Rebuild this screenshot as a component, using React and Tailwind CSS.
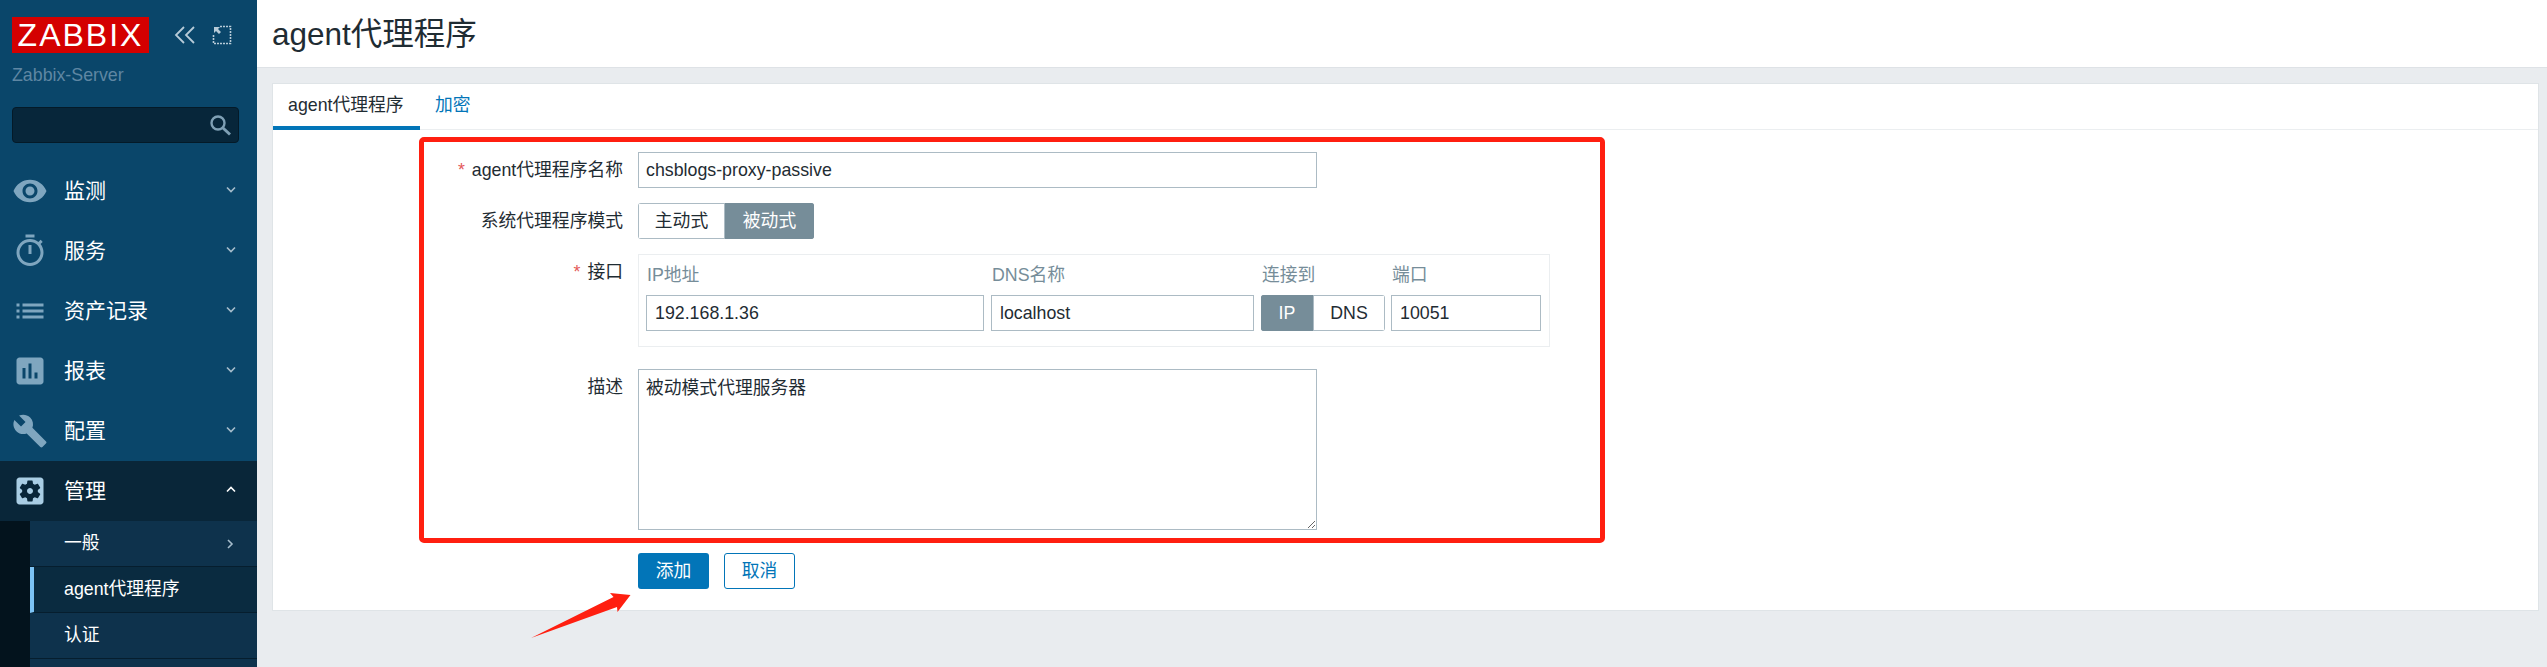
import React from 'react';

const font = { fontFamily: '"Liberation Sans", "Noto Sans CJK SC", sans-serif' };

const icons = {
    eye: 'M12 4.5C7 4.5 2.73 7.61 1 12c1.73 4.39 6 7.5 11 7.5s9.27-3.11 11-7.5c-1.73-4.39-6-7.5-11-7.5zM12 17c-2.76 0-5-2.24-5-5s2.24-5 5-5 5 2.24 5 5-2.24 5-5 5zm0-8c-1.66 0-3 1.34-3 3s1.34 3 3 3 3-1.34 3-3-1.34-3-3-3z',
    timer: 'M15 1H9v2h6V1zm-4 13h2V8h-2v6zm8.03-6.61l1.42-1.42c-.43-.51-.9-.99-1.41-1.41l-1.42 1.42C16.07 4.74 14.12 4 12 4c-4.97 0-9 4.03-9 9s4.02 9 9 9 9-4.03 9-9c0-2.12-.74-4.07-1.97-5.61zM12 20c-3.87 0-7-3.13-7-7s3.13-7 7-7 7 3.13 7 7-3.13 7-7 7z',
    list: 'M3 13h2v-2H3v2zm0 4h2v-2H3v2zm0-8h2V7H3v2zm4 4h14v-2H7v2zm0 4h14v-2H7v2zM7 7v2h14V7H7z',
    chart: 'M19 3H5c-1.1 0-2 .9-2 2v14c0 1.1.9 2 2 2h14c1.1 0 2-.9 2-2V5c0-1.1-.9-2-2-2zM9 17H7v-7h2v7zm4 0h-2V7h2v10zm4 0h-2v-4h2v4z',
    wrench: 'M22.7 19l-9.1-9.1c.9-2.3.4-5-1.5-6.9-2-2-5-2.4-7.4-1.3L9 6 6 9 1.6 4.7C.4 7.1.9 10.1 2.9 12.1c1.9 1.9 4.6 2.4 6.9 1.5l9.1 9.1c.4.4 1 .4 1.4 0l2.3-2.3c.5-.4.5-1.1.1-1.4z',
    gear: 'M12 10c-1.1 0-2 .9-2 2s.9 2 2 2 2-.9 2-2-.9-2-2-2zm7-7H5c-1.11 0-2 .9-2 2v14c0 1.1.89 2 2 2h14c1.11 0 2-.9 2-2V5c0-1.1-.89-2-2-2zm-1.75 9c0 .23-.02.46-.05.68l1.48 1.16c.13.11.17.3.08.45l-1.4 2.42c-.09.15-.27.21-.43.15l-1.74-.7c-.36.28-.76.51-1.18.69l-.26 1.85c-.03.17-.18.3-.35.3h-2.8c-.17 0-.32-.13-.35-.29l-.26-1.85c-.43-.18-.82-.41-1.18-.69l-1.74.7c-.16.06-.34 0-.43-.15l-1.4-2.42c-.09-.15-.05-.34.08-.45l1.48-1.16c-.03-.23-.05-.46-.05-.69 0-.23.02-.46.05-.68l-1.48-1.16c-.13-.11-.17-.3-.08-.45l1.4-2.42c.09-.15.27-.21.43-.15l1.74.7c.36-.28.76-.51 1.18-.69l.26-1.85c.03-.17.18-.3.35-.3h2.8c.17 0 .32.13.35.29l.26 1.85c.43.18.82.41 1.18.69l1.74-.7c.16-.06.34 0 .43.15l1.4 2.42c.09.15.05.34-.08.45l-1.48 1.16c.03.23.05.46.05.69z',
};

function Chevron({ dir = 'down', light }) {
    const d = dir === 'down' ? 'M1 1.5l4 4 4-4' : dir === 'up' ? 'M1 5.5l4-4 4 4' : 'M2 1l4 4-4 4';
    return (
        <svg viewBox="0 0 10 10" className={`w-[10px] h-[10px] shrink-0 fill-none stroke-[1.6] ${light ? 'stroke-white' : 'stroke-[#a5bccb]'}`}>
            <path d={d} />
        </svg>
    );
}

function NavItem({ icon, label, open }) {
    return (
        <div className={`flex items-center h-[60px] pl-3 pr-[21px] ${open ? 'bg-[#092639]' : ''}`}>
            <svg viewBox="0 0 24 24" className={`w-9 h-9 shrink-0 ${open ? 'fill-[#a9cde4]' : 'fill-[#7fa6bf]'}`}>
                <path d={icons[icon]} />
            </svg>
            <span className="ml-4 flex-1 text-[21px] text-white">{label}</span>
            <Chevron dir={open ? 'up' : 'down'} light={open} />
        </div>
    );
}

function SubItem({ label, active, arrow }) {
    return (
        <div className={`flex items-center h-[46px] pr-[21px] border-b border-[#061e2e] ${active ? 'bg-[#0a2b40] border-l-4 border-l-[#7cc3f5] pl-[30px]' : 'pl-[34px] bg-[#0e324c]'}`}>
            <span className="flex-1 text-[17.8px] text-white">{label}</span>
            {arrow && <Chevron dir="right" />}
        </div>
    );
}

function Sidebar() {
    return (
        <aside className="w-[257px] shrink-0 h-full bg-[#0a466a] overflow-hidden">
            <div className="flex items-center pt-[17px] pl-3">
                <div className="w-[137px] h-9 bg-[#d40000] text-white text-[32px] leading-9 font-normal text-center tracking-[2px] overflow-hidden">ZABBIX</div>
                <svg viewBox="0 0 22 20" className="ml-[25px] w-[22px] h-5 fill-none stroke-[#b7cbd8] stroke-[1.8]">
                    <path d="M10 2L2 10l8 8M20 2l-8 8 8 8" />
                </svg>
                <svg viewBox="0 0 20 20" className="ml-[16px] w-5 h-5 fill-none stroke-[#b7cbd8]">
                    <path d="M8 1.500h10.500v17H1.500V10" strokeWidth="1.6" strokeDasharray="2 1" />
                    <path d="M2 2h6l-2 2 3 3-2 2-3-3-2 2z" fill="#b7cbd8" stroke="none" />
                </svg>
            </div>
            <div className="pl-3 mt-3 text-[17.8px] leading-5 text-[#5f87a3]">Zabbix-Server</div>
            <div className="mx-3 mt-[22px] w-[227px] h-9 rounded-[4px] bg-[#07263a] border border-[#041a28] flex items-center justify-end pr-[7px]">
                <svg viewBox="0 0 22 22" className="w-[22px] h-[22px] fill-none stroke-[#7fa0b5]">
                    <circle cx="9" cy="9" r="6.500" strokeWidth="2.400" />
                    <path d="M14 14l7 6.500" strokeWidth="3" />
                </svg>
            </div>
            <nav className="mt-[18px]">
                <NavItem icon="eye" label="监测" />
                <NavItem icon="timer" label="服务" />
                <NavItem icon="list" label="资产记录" />
                <NavItem icon="chart" label="报表" />
                <NavItem icon="wrench" label="配置" />
                <NavItem icon="gear" label="管理" open />
                <div className="bg-[#03131d] pl-[30px]">
                    <SubItem label="一般" arrow />
                    <SubItem label="agent代理程序" active />
                    <SubItem label="认证" />
                    <div className="h-[46px] bg-[#0e324c]" />
                </div>
            </nav>
        </aside>
    );
}

const inputCls = 'h-9 border border-[#acbbc4] bg-white text-[17.8px] text-[#1f2c33] outline-none';

function Segment({ items, selected, widths }) {
    return (
        <div className="flex h-9 rounded-[3px] overflow-hidden text-[17.8px]">
            {items.map((item, i) => (
                <div
                    key={item}
                    style={{ width: widths[i] }}
                    className={`flex items-center justify-center border ${i === selected ? 'bg-[#768d99] border-[#768d99] text-white' : 'bg-white border-[#acbbc4] text-[#1f2c33]'}`}
                >
                    {item}
                </div>
            ))}
        </div>
    );
}

function Row({ label, required, className = '', children }) {
    return (
        <div className={`flex ${className}`}>
            <div className="w-[199px] shrink-0 text-right text-[17.8px] leading-9 text-[#1f2c33]">
                {required && <span className="text-[#e45959] mr-[7px]">*</span>}
                {label}
            </div>
            <div className="ml-[15px]">{children}</div>
        </div>
    );
}

function FieldCol({ label, width, children }) {
    return (
        <div style={{ width }} className="flex flex-col">
            <div className="h-10 pl-px leading-[41px] text-[#768d99] text-[17.8px]">{label}</div>
            {children}
        </div>
    );
}

function InterfaceBox() {
    return (
        <div className="flex w-[912px] h-[93px] border border-[#ebeef0] pl-[7px]">
            <FieldCol label="IP地址" width={338}>
                <input readOnly value="192.168.1.36" className={`${inputCls} w-full px-[8px]`} />
            </FieldCol>
            <div className="ml-[7px]">
                <FieldCol label="DNS名称" width={263}>
                    <input readOnly value="localhost" className={`${inputCls} w-full px-[8px]`} />
                </FieldCol>
            </div>
            <div className="ml-[7px]">
                <FieldCol label="连接到" width={124}>
                    <Segment items={['IP', 'DNS']} selected={0} widths={[52, 72]} />
                </FieldCol>
            </div>
            <div className="ml-[6px]">
                <FieldCol label="端口" width={150}>
                    <input readOnly value="10051" className={`${inputCls} w-full px-[8px]`} />
                </FieldCol>
            </div>
        </div>
    );
}

export default function App() {
    return (
        <div style={font} className="relative flex w-full h-[667px] overflow-hidden bg-[#e9ecef]">
            <Sidebar />
            <main className="flex-1 min-w-0">
                <header className="h-[68px] bg-white border-b border-[#dee2e6] pl-[15px] flex items-center">
                    <h1 className="text-[31.5px] text-[#1f2c33] font-normal pt-[2px]">agent代理程序</h1>
                </header>
                <section className="mt-[15px] ml-[15px] mr-2 h-[528px] bg-white border border-[#dfe4e7]">
                    <div className="flex h-[46px] border-b border-[#ebeef0]">
                        <div className="w-[147px] h-[46px] border-b-4 border-[#0275b8] pl-[15px] leading-[42px] text-[17.8px] text-[#1f2c33]">agent代理程序</div>
                        <div className="pl-[15px] leading-[42px] text-[17.8px] text-[#0275b8]">加密</div>
                    </div>
                    <div className="ml-[146px] mt-[7px] w-[1186px] h-[406px] rounded-[5px] border-[5px] border-[#ff1f10] pt-[10px]">
                        <Row label="agent代理程序名称" required>
                            <input readOnly value="chsblogs-proxy-passive" className={`${inputCls} w-[679px] block px-[7px]`} />
                        </Row>
                        <Row label="系统代理程序模式" className="mt-[15px]">
                            <Segment items={['主动式', '被动式']} selected={1} widths={[87, 89]} />
                        </Row>
                        <Row label="接口" required className="mt-[15px]">
                            <InterfaceBox />
                        </Row>
                        <Row label="描述" className="mt-[22px]">
                            <textarea
                                readOnly
                                value="被动模式代理服务器"
                                className="block w-[679px] h-[161px] border border-[#acbbc4] bg-white px-[7px] py-[5px] text-[17.8px] text-[#1f2c33] outline-none"
                            />
                        </Row>
                    </div>
                    <div className="ml-[365px] mt-[10px] flex gap-[15px]">
                        <button className="w-[71px] h-9 rounded-[3px] bg-[#0275b8] text-white text-[17.8px]">添加</button>
                        <button className="w-[71px] h-9 rounded-[3px] bg-white border border-[#0275b8] text-[#0275b8] text-[17.8px]">取消</button>
                    </div>
                </section>
            </main>
            {/* annotation arrow drawn over the screenshot */}
            <svg viewBox="0 0 105 50" className="absolute left-[530px] top-[590px] w-[105px] h-[50px] fill-[#ff1f10]">
                <polygon points="1,48 83.500,7 80,3 100.500,5 87.500,22 87,17" />
            </svg>
        </div>
    );
}
